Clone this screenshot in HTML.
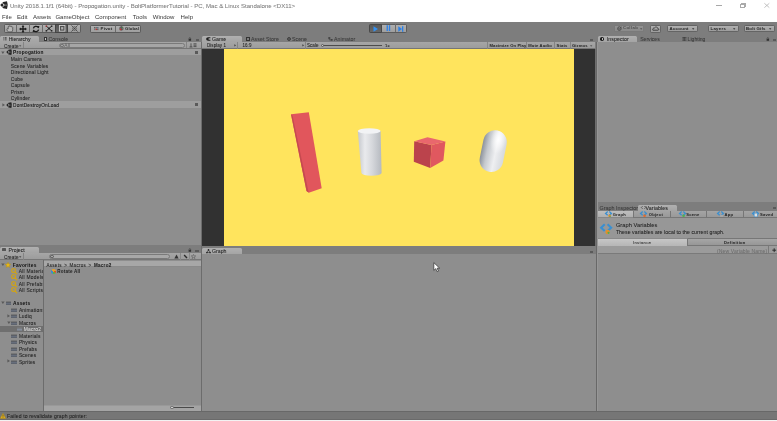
<!DOCTYPE html>
<html><head><meta charset="utf-8">
<style>
*{box-sizing:border-box;margin:0;padding:0}
html,body{width:777px;height:421px;overflow:hidden;background:#7d7d7d;font-family:"Liberation Sans",sans-serif;position:relative}
.a{position:absolute}
.t{position:absolute;white-space:nowrap;font-size:5.2px;line-height:6px;color:#222;-webkit-text-stroke:0.06px currentColor}
.m{position:absolute;white-space:nowrap;font-size:6.05px;line-height:7px;color:#383838;top:14px}
.s{position:absolute;white-space:nowrap;font-size:4.5px;line-height:6px;color:#1c1c1c;letter-spacing:0.12px}
.b{font-weight:bold;-webkit-text-stroke:0}
.tab{position:absolute;background:linear-gradient(#b0b0b0,#a4a4a4);border-radius:1.5px 1.5px 0 0}
.tbar{position:absolute;background:linear-gradient(#a6a6a6,#9c9c9c);border-bottom:0.8px solid #767676}
.panel{position:absolute;background:#8e8e8e}
.tb{position:absolute;background:linear-gradient(#b0b0b0,#9e9e9e);border:0.8px solid #5c5c5c}
.btn{position:absolute;background:linear-gradient(#b0b0b0,#9c9c9c);border:0.8px solid #646464;border-radius:1.5px}
.sep{position:absolute;width:0.8px;background:#7e7e7e}
.ham{position:absolute;width:3.4px;height:2px;border-top:0.45px solid #5a5a5a;border-bottom:0.45px solid #5a5a5a}
.ham:after{content:"";position:absolute;left:0;top:0.32px;width:3.4px;height:0.45px;background:#5a5a5a}
.dd{position:absolute;width:0;height:0;border-left:1.1px solid transparent;border-right:1.1px solid transparent;border-top:1.4px solid #333}
.fold{position:absolute;width:5.4px;height:4.1px;background:linear-gradient(#5c6066,#5a5e66 35%,#70798a 60%,#50545a);border-radius:0.3px;border-top:0.6px solid #777}
.mag{position:absolute;width:5.5px;height:5.5px}
.mag:before{content:"";position:absolute;left:0.3px;top:0.3px;width:3.4px;height:3.4px;border:0.9px solid #c9a01a;border-radius:50%}
.mag:after{content:"";position:absolute;left:3.1px;top:4px;width:2.8px;height:1.1px;background:#c9a01a;transform:rotate(45deg)}
svg{position:absolute;overflow:visible}
.clip{position:absolute;overflow:hidden}
</style></head><body><div id="root" style="position:absolute;left:0;top:0;width:777px;height:421px;will-change:transform">
<!-- title bar -->
<div class="a" style="left:0;top:0;width:777px;height:22px;background:#fff"></div>
<div class="t" style="left:10px;top:2.9px;font-size:6.05px;line-height:7px;color:#7c7c7c">Unity 2018.1.1f1 (64bit) - Propogation.unity - BoltPlatformerTutorial - PC, Mac &amp; Linux Standalone &lt;DX11&gt;</div>
<svg style="left:0px;top:1.2px" width="8" height="8.2" viewBox="0 0 8 8.2"><path d="M0.2 4.1 L3.2 0.9 L7 0.3 L7.8 4.1 L7 7.9 L3.2 7.3 Z" fill="#262626"/><path d="M4.4 4.1 L2.4 2.3 M4.4 4.1 L2.4 5.9" stroke="#f0f0f0" stroke-width="1"/><path d="M4.4 4.1 L7.8 4.1" stroke="#999" stroke-width="0.8"/></svg>
<div class="m" style="left:2px">File</div>
<div class="m" style="left:17px">Edit</div>
<div class="m" style="left:33px">Assets</div>
<div class="m" style="left:55.4px">GameObject</div>
<div class="m" style="left:95px">Component</div>
<div class="m" style="left:132.8px">Tools</div>
<div class="m" style="left:152.8px">Window</div>
<div class="m" style="left:180.6px">Help</div>
<!-- window controls -->
<div class="a" style="left:716.3px;top:5px;width:5.8px;height:0.7px;background:#a8a8a8"></div>
<div class="a" style="left:740.2px;top:3.8px;width:4.8px;height:4px;border:0.7px solid #aaa"></div>
<div class="a" style="left:741.2px;top:3px;width:4.8px;height:4px;border-top:0.7px solid #aaa;border-right:0.7px solid #aaa"></div>
<svg style="left:764.2px;top:3.2px" width="6" height="5"><path d="M0.4 0.3 L5.3 4.6 M5.3 0.3 L0.4 4.6" stroke="#aaa" stroke-width="0.7"/></svg>

<!-- toolbar tool buttons -->
<div class="tb" style="left:3.8px;top:23.9px;width:77px;height:9px;border-radius:1.5px"></div>
<div class="sep" style="left:16.4px;top:24.3px;height:8.2px;background:#6a6a6a"></div>
<div class="sep" style="left:29.4px;top:24.3px;height:8.2px;background:#6a6a6a"></div>
<div class="sep" style="left:42.4px;top:24.3px;height:8.2px;background:#6a6a6a"></div>
<div class="a" style="left:54.8px;top:23.9px;width:13.6px;height:9px;background:linear-gradient(#585858,#666);border:0.8px solid #454545"></div>
<!-- tool icons -->
<svg style="left:6.1px;top:24.9px" width="8" height="7.4" viewBox="0 0 8 7.4"><path d="M2.3 6.9 C1.1 5.6 0.6 4.4 1.1 3.8 C1.5 3.4 2 3.7 2.2 4 L2.2 1.8 C2.2 1.1 3.1 1.1 3.2 1.7 L3.3 1.2 C3.4 0.5 4.3 0.5 4.4 1.2 L4.5 1.5 C4.7 0.9 5.5 1 5.6 1.6 L5.6 2 C5.9 1.6 6.7 1.7 6.7 2.3 L6.7 4.8 C6.7 5.8 6.3 6.4 5.9 6.9 Z" fill="#b8b8b8" stroke="#4a4a4a" stroke-width="0.75"/></svg>
<svg style="left:19px;top:24.5px" width="8" height="8" viewBox="0 0 8 8"><path d="M4 1 V7 M1 4 H7" stroke="#1a1a1a" stroke-width="1.3"/><path d="M4 0.1 L2.6 1.8 H5.4 Z M4 7.9 L2.6 6.2 H5.4 Z M0.1 4 L1.8 2.6 V5.4 Z M7.9 4 L6.2 2.6 V5.4 Z" fill="#1a1a1a"/></svg>
<svg style="left:32px;top:24.6px" width="8" height="8" viewBox="0 0 8 8"><path d="M1.4 3.4 A2.8 2.6 0 0 1 6.2 2.2" fill="none" stroke="#1a1a1a" stroke-width="1.3"/><path d="M6.6 4.6 A2.8 2.6 0 0 1 1.8 5.8" fill="none" stroke="#1a1a1a" stroke-width="1.3"/><path d="M4.8 1.2 L7.4 1 L6.8 3.6Z M3.2 6.8 L0.6 7 L1.2 4.4Z" fill="#1a1a1a"/></svg>
<svg style="left:45.2px;top:25.2px" width="8" height="7" viewBox="0 0 8 7"><path d="M1.6 1.4 L6.4 5.6 M6.4 1.4 L1.6 5.6" stroke="#1e1e1e" stroke-width="0.9"/><rect x="0.6" y="0.5" width="1.5" height="1.4" fill="#8a2424"/><rect x="5.9" y="0.5" width="1.5" height="1.4" fill="#1e1e1e"/><rect x="0.6" y="5.1" width="1.5" height="1.4" fill="#1e1e1e"/><rect x="5.9" y="5.1" width="1.5" height="1.4" fill="#1e1e1e"/><rect x="3.1" y="2.6" width="1.8" height="1.8" fill="#2a2a2a"/></svg>
<svg style="left:58.6px;top:25.1px" width="6.4" height="6.6" viewBox="0 0 6.4 6.6"><rect x="0.45" y="0.45" width="5.5" height="5.7" fill="#505050" stroke="#cfcfcf" stroke-width="0.9"/><rect x="2.1" y="2.1" width="2.2" height="2.4" fill="#b0b0b0"/></svg>
<svg style="left:71.2px;top:25px" width="7" height="7" viewBox="0 0 7 7"><circle cx="3.5" cy="3.5" r="1.7" fill="none" stroke="#333" stroke-width="0.7"/><circle cx="3.5" cy="3.5" r="0.6" fill="#333"/><path d="M0.5 0.5 L1.9 1.9 M6.5 0.5 L5.1 1.9 M0.5 6.5 L1.9 5.1 M6.5 6.5 L5.1 5.1" stroke="#333" stroke-width="0.8"/></svg>

<!-- pivot / global -->
<div class="tb" style="left:89.8px;top:24.5px;width:51px;height:8px;border-radius:1.5px"></div>
<div class="sep" style="left:115px;top:25px;height:7px;background:#6a6a6a"></div>
<svg style="left:94.1px;top:27px" width="4.5" height="3.2"><rect x="0" y="0" width="1.4" height="1.4" fill="#606060"/><rect x="1.6" y="0" width="1.4" height="1.4" fill="#707070"/><rect x="3.1" y="0" width="1.4" height="1.4" fill="#5a6a80"/><rect x="0" y="1.7" width="1.4" height="1.4" fill="#777"/><rect x="1.6" y="1.7" width="1.4" height="1.4" fill="#c03030"/><rect x="3.1" y="1.7" width="1.4" height="1.4" fill="#606060"/></svg>
<div class="t b" style="left:100.5px;top:25.8px;font-size:4.4px;color:#262626;letter-spacing:0.25px">Pivot</div>
<svg style="left:118.9px;top:26.2px" width="4.8" height="4.8"><circle cx="2.4" cy="2.4" r="2.2" fill="#777"/><path d="M0.6 1.6 Q2.4 0.6 4.2 1.6 M0.4 3 Q2.4 4 4.4 3 M2.4 0.2 V4.6" stroke="#444" stroke-width="0.5" fill="none"/><circle cx="1.6" cy="3.4" r="0.9" fill="#c83030"/><circle cx="3.4" cy="1.4" r="0.6" fill="#4a8a4a"/></svg>
<div class="t b" style="left:125px;top:25.8px;font-size:4.2px;color:#262626;letter-spacing:0.2px">Global</div>

<!-- play buttons -->
<div class="tb" style="left:369px;top:23.9px;width:38.2px;height:9px;border-radius:1.5px"></div>
<div class="a" style="left:369px;top:23.9px;width:13.2px;height:9px;background:linear-gradient(#595959,#676767);border:0.8px solid #484848;border-radius:1.5px 0 0 1.5px"></div>
<div class="sep" style="left:394.7px;top:24.3px;height:8.2px;background:#6a6a6a"></div>
<svg style="left:373.2px;top:25.6px" width="6" height="6"><path d="M0.5 0.3 L5 3 L0.5 5.7 Z" fill="#3390f0"/></svg>
<svg style="left:386px;top:25.4px" width="5" height="6"><rect x="0.6" y="0.2" width="1.3" height="5.8" fill="#2a80e8"/><rect x="2.9" y="0.2" width="1.3" height="5.8" fill="#2a80e8"/></svg>
<svg style="left:398.4px;top:25.5px" width="6" height="6"><path d="M0.3 0.3 L4 3 L0.3 5.7 Z" fill="#2a80e8"/><rect x="4" y="0.2" width="1.3" height="5.6" fill="#2a80e8"/></svg>

<!-- right toolbar -->
<div class="btn" style="left:614px;top:24.9px;width:30px;height:6.9px;background:linear-gradient(#939393,#8a8a8a);border-color:#7a7a7a"></div>
<svg style="left:617.3px;top:25.9px" width="5" height="5"><circle cx="2.4" cy="2.6" r="1.8" fill="none" stroke="#4a4a4a" stroke-width="0.9"/><path d="M1.5 2.4 L2.4 3.3 L4.4 0.7" fill="none" stroke="#4a4a4a" stroke-width="0.9"/></svg>
<div class="t b" style="left:623px;top:25.4px;font-size:4.2px;color:#4e4e4e;letter-spacing:0.38px">Collab</div>
<svg style="left:639.6px;top:27.8px" width="2.6" height="2"><path d="M0 0.2 H2.4 L1.2 1.7 Z" fill="#555"/></svg>
<div class="btn" style="left:650px;top:24.6px;width:11.3px;height:8.4px"></div>
<svg style="left:652px;top:26.2px" width="7" height="5"><path d="M0.9 4.2 H6 C7 4.2 7 2.5 5.8 2.5 C5.6 0.9 3.4 0.4 2.6 1.9 C1.4 1.7 0.2 3 0.9 4.2 Z" fill="none" stroke="#222" stroke-width="0.75"/></svg>
<div class="btn" style="left:667px;top:25.2px;width:30.6px;height:7px"></div>
<div class="t b" style="left:669.5px;top:25.6px;font-size:4.3px;color:#222;letter-spacing:0.3px">Account</div>
<svg style="left:691.5px;top:28.1px" width="2.6" height="2"><path d="M0 0.2 H2.4 L1.2 1.7 Z" fill="#333"/></svg>
<div class="btn" style="left:708px;top:25.2px;width:30.6px;height:7px"></div>
<div class="t b" style="left:710.5px;top:25.6px;font-size:4.3px;color:#222;letter-spacing:0.3px">Layers</div>
<svg style="left:732.5px;top:28.1px" width="2.6" height="2"><path d="M0 0.2 H2.4 L1.2 1.7 Z" fill="#333"/></svg>
<div class="btn" style="left:743.6px;top:25.2px;width:31.2px;height:7px"></div>
<div class="t b" style="left:746px;top:25.6px;font-size:4.3px;color:#222;letter-spacing:0.2px">Bolt Gifs</div>
<svg style="left:768.5px;top:28.1px" width="2.6" height="2"><path d="M0 0.2 H2.4 L1.2 1.7 Z" fill="#333"/></svg>

<!-- ===== Left column ===== -->
<!-- hierarchy -->
<div class="tab" style="left:0;top:35.6px;width:39.3px;height:6.5px"></div>
<svg style="left:2.6px;top:37.2px" width="4" height="4"><path d="M0.4 0.5 H1.4 M0.4 1.7 H1.4 M0.4 2.9 H1.4 M2 0.5 H3.6 M2 1.7 H3.6 M2 2.9 H3.6" stroke="#333" stroke-width="0.7"/></svg>
<div class="t" style="left:8.7px;top:36.1px;color:#1e1e1e;font-size:5.1px">Hierarchy</div>
<div class="a" style="left:43.9px;top:37px;width:3.4px;height:4.2px;border:0.6px solid #333;background:#c8c8c8"></div>
<div class="t" style="left:48.5px;top:36.1px;color:#363636;letter-spacing:0.1px">Console</div>
<svg style="left:187.5px;top:36.6px" width="4" height="4"><rect x="0.6" y="1.9" width="2.5" height="1.9" fill="#333"/><path d="M1.1 2 V1.4 A0.75 0.75 0 0 1 2.6 1.4 V2" fill="none" stroke="#333" stroke-width="0.5"/></svg>
<div class="ham" style="left:195.5px;top:38.9px"></div>
<div class="tbar" style="left:0;top:42px;width:201.3px;height:6.5px"></div>
<div class="t" style="left:3.9px;top:43.5px;font-size:4.7px;color:#222;letter-spacing:0.12px">Create</div>
<svg style="left:18.9px;top:45.0px" width="2.6" height="2"><path d="M0 0.2 H2.4 L1.2 1.7 Z" fill="#555"/></svg>
<div class="sep" style="left:22.5px;top:42px;height:6px;background:#848484"></div>
<div class="a" style="left:59px;top:42.9px;width:126px;height:4.9px;border:0.7px solid #7a7a7a;border-radius:2.5px;background:#a6a6a6"></div>
<div class="a" style="left:60.4px;top:43.6px;width:3.2px;height:3.2px;border:0.6px solid #666;border-radius:50%"></div>
<div class="t" style="left:64.3px;top:42.5px;font-size:4.8px;color:#666;letter-spacing:0.2px">All</div>
<div class="sep" style="left:186px;top:42px;height:6px;background:#848484"></div>
<svg style="left:189px;top:43px" width="8" height="5"><path d="M2 0.3 V4 H0.5 M2 4 H3.5 M4.5 0.8 H7.5 M4.5 2.2 H7.5 M4.5 3.6 H7.5" fill="none" stroke="#333" stroke-width="0.7"/></svg>
<div class="panel" style="left:0;top:48.5px;width:201.3px;height:196.6px"></div>
<div class="a" style="left:0;top:49px;width:201.3px;height:6.4px;background:#9e9e9e"></div>
<svg style="left:1.4px;top:50.8px" width="4" height="4"><path d="M0.2 0.4 H3.6 L1.9 3 Z" fill="#5a5a5a"/></svg>
<svg style="left:6px;top:49.3px" width="6.2" height="6.2" viewBox="0 0 8 8.2"><path d="M0.2 4.1 L3.2 0.9 L7 0.3 L7.8 4.1 L7 7.9 L3.2 7.3 Z" fill="#262626"/><path d="M4.4 4.1 L2.4 2.3 M4.4 4.1 L2.4 5.9" stroke="#b8b8b8" stroke-width="1"/><path d="M4.4 4.1 L7.8 4.1" stroke="#777" stroke-width="0.8"/></svg>
<div class="t b" style="left:13.1px;top:50.3px;color:#111;font-size:4.8px;letter-spacing:0.2px">Propogation</div>
<div class="ham" style="left:195px;top:51.2px"></div>
<div class="t" style="left:10.8px;top:57.3px;font-size:4.9px;letter-spacing:0.16px">Main Camera</div>
<div class="t" style="left:10.8px;top:63.7px;font-size:4.9px;letter-spacing:0.16px">Scene Variables</div>
<div class="t" style="left:10.8px;top:70.3px;font-size:4.9px;letter-spacing:0.16px">Directional Light</div>
<div class="t" style="left:10.8px;top:76.8px;font-size:4.9px;letter-spacing:0.16px">Cube</div>
<div class="t" style="left:10.8px;top:83.3px;font-size:4.9px;letter-spacing:0.16px">Capsule</div>
<div class="t" style="left:10.8px;top:89.8px;font-size:4.9px;letter-spacing:0.16px">Prism</div>
<div class="t" style="left:10.8px;top:96.4px;font-size:4.9px;letter-spacing:0.16px">Cylinder</div>
<div class="a" style="left:0;top:101.3px;width:201.3px;height:6.3px;background:#9e9e9e"></div>
<svg style="left:1.8px;top:102.6px" width="4" height="4"><path d="M0.4 0.2 V3.6 L3 1.9 Z" fill="#5a5a5a"/></svg>
<svg style="left:6px;top:101.5px" width="6.2" height="6.2" viewBox="0 0 8 8.2"><path d="M0.2 4.1 L3.2 0.9 L7 0.3 L7.8 4.1 L7 7.9 L3.2 7.3 Z" fill="#262626"/><path d="M4.4 4.1 L2.4 2.3 M4.4 4.1 L2.4 5.9" stroke="#b8b8b8" stroke-width="1"/><path d="M4.4 4.1 L7.8 4.1" stroke="#777" stroke-width="0.8"/></svg>
<div class="t" style="left:13.1px;top:102.6px;color:#111;font-size:4.75px;letter-spacing:0.16px">DontDestroyOnLoad</div>
<div class="ham" style="left:195px;top:103.4px"></div>

<!-- project -->
<div class="a" style="left:0;top:245.1px;width:201.3px;height:1.9px;background:#7d7d7d"></div>
<div class="tab" style="left:0;top:247px;width:39px;height:5.8px"></div>
<div class="a" style="left:2.2px;top:248.4px;width:4.2px;height:3px;background:#555;border-radius:0.6px"></div>
<div class="t" style="left:8.6px;top:246.8px;color:#222">Project</div>
<svg style="left:187.8px;top:248.4px" width="4" height="4"><rect x="0.6" y="1.9" width="2.5" height="1.9" fill="#333"/><path d="M1.1 2 V1.4 A0.75 0.75 0 0 1 2.6 1.4 V2" fill="none" stroke="#333" stroke-width="0.5"/></svg>
<div class="ham" style="left:195.2px;top:249.6px"></div>
<div class="tbar" style="left:0;top:252.7px;width:201.3px;height:7.6px"></div>
<div class="t" style="left:3.9px;top:254.7px;font-size:4.7px;color:#222;letter-spacing:0.12px">Create</div>
<svg style="left:18.8px;top:256.40000000000003px" width="2.6" height="2"><path d="M0 0.2 H2.4 L1.2 1.7 Z" fill="#444"/></svg>
<div class="sep" style="left:23.3px;top:253px;height:7px;background:#848484"></div>
<div class="a" style="left:48.5px;top:253.6px;width:121px;height:5.9px;border:0.7px solid #7a7a7a;border-radius:3px;background:#a8a8a8"></div>
<div class="a" style="left:50.4px;top:254.6px;width:3.2px;height:3.2px;border:0.6px solid #555;border-radius:50%"></div>
<div class="sep" style="left:180px;top:253px;height:7px;background:#888"></div>
<div class="sep" style="left:189px;top:253px;height:7px;background:#888"></div>
<svg style="left:173.8px;top:254.2px" width="5" height="5"><path d="M2.5 0.4 L4.6 4.6 H0.4 Z" fill="#333"/></svg>
<svg style="left:182.5px;top:254.2px" width="5" height="5"><path d="M0.6 1.6 L1.6 0.6 L4.5 3.5 L3.5 4.5 Z" fill="#2a2a2a"/></svg>
<svg style="left:191px;top:254px" width="5" height="5"><path d="M2.5 0.3 L3.1 1.9 L4.8 1.9 L3.4 2.9 L4 4.6 L2.5 3.6 L1 4.6 L1.6 2.9 L0.2 1.9 L1.9 1.9 Z" fill="none" stroke="#555" stroke-width="0.5"/></svg>
<div class="panel" style="left:0;top:260.3px;width:201.3px;height:150.5px"></div>
<div class="a" style="left:43px;top:260.3px;width:1px;height:150.5px;background:#6c6c6c"></div>
<div class="a" style="left:44px;top:261.1px;width:157.3px;height:6.3px;background:#a7a7a7;border-bottom:0.6px solid #8a8a8a"></div>
<div class="t" style="left:46.4px;top:262.9px;color:#222;font-size:4.5px;letter-spacing:0.32px;word-spacing:0.8px">Assets &gt; Macros &gt; <b>Macro2</b></div>
<div class="a" style="left:50.6px;top:268.8px;width:5.6px;height:5.6px;border-radius:50%;background:conic-gradient(from -30deg,#e8a028 0 30%,#e05028 30% 45%,#60b040 45% 60%,#3a8ad0 60% 95%,#e8a028 95%)"></div>
<div class="t b" style="left:57.3px;top:269.1px;color:#222;font-size:4.55px;letter-spacing:0.2px">Rotate All</div>

<div class="clip" style="left:0;top:260.3px;width:43px;height:110px">
<svg style="left:1.2px;top:2.6px" width="4" height="4"><path d="M0.2 0.4 H3.6 L1.9 3 Z" fill="#5a5a5a"/></svg>
<svg style="left:5.3px;top:1.4px" width="6" height="6"><path d="M3 0.2 L3.8 2.1 L5.8 2.2 L4.3 3.5 L4.8 5.5 L3 4.4 L1.2 5.5 L1.7 3.5 L0.2 2.2 L2.2 2.1 Z" fill="#e8b818" stroke="#b08a10" stroke-width="0.4"/></svg>
<div class="t b" style="left:12.8px;top:2.3px;color:#111;font-size:4.85px;letter-spacing:0.25px">Favorites</div>
<svg style="left:11.2px;top:7.6px" width="6.5" height="6.5"><circle cx="2.6" cy="2.5" r="2" fill="#a89a6a" fill-opacity="0.35" stroke="#cda21c" stroke-width="1.1"/><path d="M4.1 4.1 L5.7 5.8" stroke="#cda21c" stroke-width="1.3" stroke-linecap="round"/></svg>
<div class="t" style="left:18.7px;top:8.7px;font-size:4.9px;letter-spacing:0.25px">All Materials</div>
<svg style="left:11.2px;top:14.0px" width="6.5" height="6.5"><circle cx="2.6" cy="2.5" r="2" fill="#a89a6a" fill-opacity="0.35" stroke="#cda21c" stroke-width="1.1"/><path d="M4.1 4.1 L5.7 5.8" stroke="#cda21c" stroke-width="1.3" stroke-linecap="round"/></svg>
<div class="t" style="left:18.7px;top:15.1px;font-size:4.9px;letter-spacing:0.25px">All Models</div>
<svg style="left:11.2px;top:20.400000000000002px" width="6.5" height="6.5"><circle cx="2.6" cy="2.5" r="2" fill="#a89a6a" fill-opacity="0.35" stroke="#cda21c" stroke-width="1.1"/><path d="M4.1 4.1 L5.7 5.8" stroke="#cda21c" stroke-width="1.3" stroke-linecap="round"/></svg>
<div class="t" style="left:18.7px;top:21.5px;font-size:4.9px;letter-spacing:0.25px">All Prefabs</div>
<svg style="left:11.2px;top:26.8px" width="6.5" height="6.5"><circle cx="2.6" cy="2.5" r="2" fill="#a89a6a" fill-opacity="0.35" stroke="#cda21c" stroke-width="1.1"/><path d="M4.1 4.1 L5.7 5.8" stroke="#cda21c" stroke-width="1.3" stroke-linecap="round"/></svg>
<div class="t" style="left:18.7px;top:27.9px;font-size:4.9px;letter-spacing:0.25px">All Scripts</div>

<svg style="left:1.2px;top:41px" width="4" height="4"><path d="M0.2 0.4 H3.6 L1.9 3 Z" fill="#5a5a5a"/></svg>
<div class="fold" style="left:5.7px;top:40.8px"></div>
<div class="t b" style="left:12.9px;top:40.9px;color:#111;font-size:4.9px;letter-spacing:0.25px">Assets</div>
<div class="fold" style="left:11.4px;top:47.4px"></div>
<div class="t" style="left:18.9px;top:47.3px;font-size:4.9px;letter-spacing:0.2px">Animations</div>
<svg style="left:7px;top:53.5px" width="4" height="4"><path d="M0.4 0.2 V3.6 L3 1.9 Z" fill="#5a5a5a"/></svg>
<div class="fold" style="left:11.4px;top:53.9px"></div>
<div class="t" style="left:18.9px;top:53.8px;font-size:4.9px;letter-spacing:0.2px">Ludiq</div>
<svg style="left:6.6px;top:60.4px" width="4" height="4"><path d="M0.2 0.4 H3.6 L1.9 3 Z" fill="#5a5a5a"/></svg>
<div class="fold" style="left:11.4px;top:60.4px"></div>
<div class="t" style="left:18.9px;top:60.3px;font-size:4.9px;letter-spacing:0.2px">Macros</div>
<div class="a" style="left:0;top:65.8px;width:43px;height:5.8px;background:#6f6f6f"></div>
<div class="fold" style="left:17.1px;top:66.8px;background:linear-gradient(#7a7e84,#787c84 35%,#8e98a8 60%,#6e7278)"></div>
<div class="t" style="left:23.7px;top:66.8px;color:#dedede;font-size:4.9px;letter-spacing:0.2px">Macro2</div>
<div class="fold" style="left:11.4px;top:73.5px"></div>
<div class="t" style="left:18.9px;top:73.4px;font-size:4.9px;letter-spacing:0.2px">Materials</div>
<div class="fold" style="left:11.4px;top:80px"></div>
<div class="t" style="left:18.9px;top:79.9px;font-size:4.9px;letter-spacing:0.2px">Physics</div>
<div class="fold" style="left:11.4px;top:86.5px"></div>
<div class="t" style="left:18.9px;top:86.4px;font-size:4.9px;letter-spacing:0.2px">Prefabs</div>
<div class="fold" style="left:11.4px;top:93px"></div>
<div class="t" style="left:18.9px;top:92.9px;font-size:4.9px;letter-spacing:0.2px">Scenes</div>
<svg style="left:7px;top:99.2px" width="4" height="4"><path d="M0.4 0.2 V3.6 L3 1.9 Z" fill="#5a5a5a"/></svg>
<div class="fold" style="left:11.4px;top:99.5px"></div>
<div class="t" style="left:18.9px;top:99.4px;font-size:4.9px;letter-spacing:0.2px">Sprites</div>
</div>

<div class="a" style="left:44px;top:404.8px;width:157.3px;height:6.3px;background:#a4a4a4;border-top:0.6px solid #999"></div>
<div class="a" style="left:172px;top:407.4px;width:22px;height:0.8px;background:#4a4a4a"></div>
<div class="a" style="left:170.2px;top:405.9px;width:3.6px;height:3.6px;border-radius:50%;background:#d0d0d0;border:0.6px solid #666"></div>

<!-- ===== Center column ===== -->
<div class="tab" style="left:202.4px;top:35.5px;width:39.4px;height:6.6px"></div>
<svg style="left:205.8px;top:37.1px" width="5" height="4"><path d="M2.2 0.3 C0.8 0.3 0.2 1.2 0.2 2 C0.2 2.9 0.9 3.7 2.2 3.7 L4.4 3.7 L4.4 2.8 L2.6 2.8 L2.6 1.2 L4.4 1.2 L4.4 0.3 Z" fill="#1e1e1e"/></svg>
<div class="t" style="left:212px;top:36.1px;color:#222">Game</div>
<div class="a" style="left:246.2px;top:37.1px;width:3.4px;height:3.8px;border:0.7px solid #333"></div>
<div class="t" style="left:251px;top:36.1px;color:#383838;letter-spacing:0.1px">Asset Store</div>
<svg style="left:287.4px;top:37px" width="4" height="4"><circle cx="2" cy="2" r="1.5" fill="none" stroke="#333" stroke-width="0.7"/><path d="M2 0 V4 M0 2 H4" stroke="#333" stroke-width="0.5"/></svg>
<div class="t" style="left:292px;top:36.1px;color:#383838;letter-spacing:0.05px">Scene</div>
<svg style="left:327.6px;top:37px" width="5" height="4"><rect x="0.3" y="0.3" width="2" height="1.4" fill="#333"/><rect x="2.6" y="2.2" width="2" height="1.4" fill="#333"/><path d="M1.3 1.7 V2.9 H2.6" fill="none" stroke="#333" stroke-width="0.5"/></svg>
<div class="t" style="left:334px;top:36.1px;color:#383838;letter-spacing:0.05px">Animator</div>
<div class="ham" style="left:589.5px;top:38.6px"></div>
<div class="tbar" style="left:202.4px;top:42px;width:393px;height:7px"></div>
<div class="t" style="left:207px;top:42.7px;font-size:4.5px;color:#1e1e1e;letter-spacing:0.05px">Display 1</div>
<svg style="left:233.6px;top:44.4px" width="3" height="3"><path d="M0.3 0.2 L2.2 1.3 L0.3 2.4 Z" fill="#444"/></svg>
<div class="sep" style="left:237px;top:42px;height:7px;background:#848484"></div>
<div class="t" style="left:242.5px;top:42.7px;font-size:4.5px;color:#1e1e1e;letter-spacing:0.05px">16:9</div>
<svg style="left:301.6px;top:44.4px" width="3" height="3"><path d="M0.3 0.2 L2.2 1.3 L0.3 2.4 Z" fill="#444"/></svg>
<div class="sep" style="left:304.8px;top:42px;height:7px;background:#848484"></div>
<div class="t" style="left:307px;top:42.7px;font-size:4.5px;color:#1e1e1e;letter-spacing:0.05px">Scale</div>
<div class="a" style="left:322px;top:45.2px;width:60px;height:0.9px;background:#4c4c4c"></div>
<div class="a" style="left:320.6px;top:43.6px;width:3.6px;height:3.6px;border-radius:50%;background:#d0d0d0;border:0.6px solid #555"></div>
<div class="t" style="left:385px;top:42.7px;font-size:4.3px;color:#1e1e1e;letter-spacing:0.2px">1x</div>
<div class="sep" style="left:487px;top:42px;height:7px;background:#848484"></div>
<div class="t b" style="left:489.5px;top:42.7px;font-size:4.15px;color:#1e1e1e;letter-spacing:0.12px">Maximize On Play</div>
<div class="sep" style="left:526.3px;top:42px;height:7px;background:#848484"></div>
<div class="t b" style="left:528.3px;top:42.7px;font-size:4.15px;color:#1e1e1e;letter-spacing:0.12px">Mute Audio</div>
<div class="sep" style="left:554px;top:42px;height:7px;background:#848484"></div>
<div class="t b" style="left:556.6px;top:42.7px;font-size:4.15px;color:#1e1e1e;letter-spacing:0.12px">Stats</div>
<div class="sep" style="left:569.6px;top:42px;height:7px;background:#848484"></div>
<div class="t b" style="left:572px;top:42.7px;font-size:4.15px;color:#1e1e1e;letter-spacing:0.12px">Gizmos</div>
<svg style="left:589.6px;top:44.8px" width="2.6" height="2"><path d="M0 0.2 H2.4 L1.2 1.7 Z" fill="#555"/></svg>
<div class="a" style="left:202.4px;top:49px;width:393px;height:196.6px;background:#313131"></div>
<div class="a" style="left:223.9px;top:49px;width:349.8px;height:196.6px;background:#ffe45d"></div>

<!-- 3D objects -->
<svg style="left:0;top:0" width="777" height="421">
  <defs>
    <linearGradient id="cyl" x1="0" x2="1" y1="0" y2="0">
      <stop offset="0" stop-color="#c4c7cc"/><stop offset="0.3" stop-color="#e9eaed"/><stop offset="0.6" stop-color="#d6d8dc"/><stop offset="1" stop-color="#b5b9bf"/>
    </linearGradient>
    <linearGradient id="capl" x1="0" x2="1" y1="0" y2="0">
      <stop offset="0" stop-color="#8c929b"/><stop offset="0.25" stop-color="#c5c9ce"/><stop offset="0.6" stop-color="#eeeff1"/><stop offset="1" stop-color="#d5d8dc"/>
    </linearGradient>
    <radialGradient id="cap" cx="0.62" cy="0.2" r="0.35">
      <stop offset="0" stop-color="#ffffff" stop-opacity="1"/><stop offset="1" stop-color="#ffffff" stop-opacity="0"/>
    </radialGradient>
  </defs>
  <!-- red prism -->
  <polygon points="291,114.3 308.8,112.2 321.7,188.3 308.8,192.8 306.5,191" fill="#e1565c"/>
  <polygon points="291,114.3 292.6,115.8 308.6,192.6 306.5,191" fill="#c54a50"/>
  <!-- cylinder -->
  <path d="M357.8,131 L361.4,173 A10.1,2.8 0 0 0 381.6,173 L380.6,131 Z" fill="url(#cyl)"/>
  <ellipse cx="369.2" cy="131" rx="11.4" ry="2.8" fill="#f2f3f5"/>
  <!-- cube -->
  <polygon points="414.2,141.2 431.5,145 430.2,167.9 413.8,161.7" fill="#bb434c"/>
  <polygon points="431.5,145 445.4,141.5 443.4,160.4 430.2,167.9" fill="#e0585f"/>
  <polygon points="427.5,137.2 445.4,141.5 431.5,145 414.2,141.2" fill="#e9676d"/>
  <!-- capsule -->
  <g transform="translate(493.2,151.2) rotate(11.5)">
    <rect x="-11.8" y="-21" width="23.6" height="42" rx="11.8" ry="11.8" fill="url(#capl)"/><rect x="-11.8" y="-21" width="23.6" height="42" rx="11.8" ry="11.8" fill="url(#cap)"/>
  </g>
</svg>

<div class="a" style="left:202.4px;top:245.6px;width:393px;height:8.8px;background:#7d7d7d"></div>
<div class="tab" style="left:202.4px;top:248px;width:39.5px;height:6.4px"></div>
<svg style="left:205.6px;top:249.3px" width="5" height="4.5"><circle cx="2.5" cy="0.9" r="0.8" fill="#222"/><circle cx="0.9" cy="3.6" r="0.8" fill="#222"/><circle cx="4.1" cy="3.6" r="0.8" fill="#222"/><path d="M2.5 0.9 L0.9 3.6 H4.1 Z" fill="none" stroke="#222" stroke-width="0.5"/></svg>
<div class="t" style="left:212px;top:248.3px;color:#222">Graph</div>
<div class="ham" style="left:589.5px;top:251px"></div>
<div class="panel" style="left:202.4px;top:254.4px;width:393.4px;height:156.3px"></div>
<!-- cursor -->
<svg style="left:433px;top:261.6px" width="8" height="11"><path d="M0.8 0.6 L0.8 8.4 L2.7 6.7 L4.2 9.7 L5.5 9.1 L4.1 6.2 L6.7 6.2 Z" fill="#fff" stroke="#3a3a3a" stroke-width="0.8"/></svg>

<!-- column separators -->
<div class="a" style="left:201.3px;top:42px;width:1.1px;height:369px;background:#6c6c6c"></div>
<div class="a" style="left:594.8px;top:49px;width:1px;height:196.6px;background:#6e6e6e"></div>
<div class="a" style="left:595.8px;top:42px;width:1.3px;height:368.7px;background:#686868"></div>
<div class="a" style="left:597.1px;top:42.2px;width:0.8px;height:368.5px;background:#979797"></div>

<!-- ===== Right column ===== -->
<div class="tab" style="left:597.5px;top:35.8px;width:39.5px;height:6.4px"></div>
<div class="a" style="left:600.2px;top:37.1px;width:3.6px;height:3.6px;border-radius:50%;background:#1e1e1e"></div>
<div class="a" style="left:601.7px;top:37.8px;width:0.6px;height:1.8px;background:#bbb"></div>
<div class="t" style="left:606.7px;top:36.1px;color:#222;letter-spacing:0.1px">Inspector</div>
<div class="t" style="left:640.2px;top:36.1px;color:#383838;font-size:5.1px">Services</div>
<svg style="left:681.5px;top:37.2px" width="5" height="4"><path d="M0.3 0.5 H4.5 M0.3 1.9 H4.5 M0.3 3.3 H4.5 M2.2 0 V4" stroke="#333" stroke-width="0.6"/></svg>
<div class="t" style="left:687.6px;top:36.1px;color:#383838;font-size:5.1px">Lighting</div>
<svg style="left:766.2px;top:37px" width="4" height="4"><rect x="0.6" y="1.9" width="2.5" height="1.9" fill="#333"/><path d="M1.1 2 V1.4 A0.75 0.75 0 0 1 2.6 1.4 V2" fill="none" stroke="#333" stroke-width="0.5"/></svg>
<div class="ham" style="left:773px;top:38.6px"></div>
<div class="panel" style="left:597.5px;top:42.2px;width:180px;height:159.8px"></div>

<div class="a" style="left:597.5px;top:202px;width:180px;height:8.6px;background:#7d7d7d"></div>
<div class="clip" style="left:597.5px;top:204.5px;width:40px;height:6px"><div class="t" style="left:2px;top:0.1px;color:#3a3a3a;font-size:5.4px">Graph Inspector</div></div>
<div class="tab" style="left:637.5px;top:204.7px;width:39.6px;height:5.9px"></div>
<svg style="left:640.5px;top:206.4px" width="5" height="3"><path d="M1.6 0.2 L0.3 1.5 L1.6 2.8 M3.4 0.2 L4.7 1.5 L3.4 2.8" fill="none" stroke="#222" stroke-width="0.6"/></svg>
<div class="t" style="left:645.5px;top:204.7px;color:#222;font-size:5.3px;letter-spacing:0.1px">Variables</div>
<div class="ham" style="left:773px;top:207px"></div>
<div class="a" style="left:597.5px;top:210.6px;width:180px;height:7.8px;background:linear-gradient(#a4a4a4,#999);border-bottom:0.8px solid #777"></div>
<div class="a" style="left:597.5px;top:210.6px;width:35.7px;height:7.8px;background:linear-gradient(#bebebe,#b0b0b0);border-bottom:0.8px solid #888"></div>
<div class="sep" style="left:633.2px;top:210.6px;height:7.8px;background:#767676"></div>
<div class="sep" style="left:669.6px;top:210.6px;height:7.8px;background:#767676"></div>
<div class="sep" style="left:706.3px;top:210.6px;height:7.8px;background:#767676"></div>
<div class="sep" style="left:743.4px;top:210.6px;height:7.8px;background:#767676"></div>
<svg style="left:604.9px;top:211.3px" width="7" height="6.4" viewBox="0 0 13 12"><path d="M5 1 L1 4.5 L5 8 M8 1 L12 4.5 L8 8" fill="none" stroke="#3a8fd0" stroke-width="2.4"/><circle cx="8.5" cy="9" r="2.5" fill="#e0902a"/><circle cx="9.5" cy="10" r="1.3" fill="#4caf50"/></svg>
<div class="t b" style="left:612.7px;top:211.7px;font-size:4.1px;color:#1e1e1e;letter-spacing:0.25px">Graph</div>
<svg style="left:640.3px;top:211.3px" width="7" height="6.4" viewBox="0 0 13 12"><path d="M5 1 L1 4.5 L5 8 M8 1 L12 4.5 L8 8" fill="none" stroke="#3a8fd0" stroke-width="2.4"/><circle cx="8.5" cy="9" r="2.5" fill="#e06a2a"/></svg>
<div class="t b" style="left:648.8px;top:211.7px;font-size:4.1px;color:#1e1e1e;letter-spacing:0.25px">Object</div>
<svg style="left:678.5px;top:211.3px" width="7" height="6.4" viewBox="0 0 13 12"><path d="M5 1 L1 4.5 L5 8 M8 1 L12 4.5 L8 8" fill="none" stroke="#3a8fd0" stroke-width="2.4"/><circle cx="8.5" cy="9" r="2.5" fill="#4caf50"/></svg>
<div class="t b" style="left:686.3px;top:211.7px;font-size:4.1px;color:#1e1e1e;letter-spacing:0.25px">Scene</div>
<svg style="left:716.5px;top:211.3px" width="7" height="6.4" viewBox="0 0 13 12"><path d="M5 1 L1 4.5 L5 8 M8 1 L12 4.5 L8 8" fill="none" stroke="#3a8fd0" stroke-width="2.4"/><rect x="6" y="7" width="5" height="4" fill="#aaa"/></svg>
<div class="t b" style="left:724.5px;top:211.7px;font-size:4.1px;color:#1e1e1e;letter-spacing:0.25px">App</div>
<svg style="left:751.5px;top:211.3px" width="7" height="6.4" viewBox="0 0 13 12"><path d="M5 1 L1 4.5 L5 8 M8 1 L12 4.5 L8 8" fill="none" stroke="#3a8fd0" stroke-width="2.4"/><rect x="4" y="4" width="6" height="7" fill="#ddd" stroke="#3a8fd0" stroke-width="1"/></svg>
<div class="t b" style="left:760px;top:211.7px;font-size:4.1px;color:#1e1e1e;letter-spacing:0.25px">Saved</div>

<div class="panel" style="left:597.5px;top:218.4px;width:180px;height:192.3px"></div>
<div class="a" style="left:597.5px;top:218.4px;width:180px;height:19.3px;background:#979797"></div>
<svg style="left:599.6px;top:222.7px" width="12.3" height="11.6" viewBox="0 0 13 12"><path d="M5 1.2 L1.2 4.8 L5 8.4 M8 1.2 L11.8 4.8 L8 8.4" fill="none" stroke="#3a8fd0" stroke-width="2.2"/><circle cx="8" cy="9.4" r="2.3" fill="#e0902a"/><circle cx="9" cy="10.3" r="1.1" fill="#4caf50"/></svg>
<div class="t" style="left:615.9px;top:221.7px;font-size:5.7px;color:#222;letter-spacing:0.05px">Graph Variables</div>
<div class="t" style="left:615.9px;top:229.1px;color:#222;font-size:5.15px;letter-spacing:0.08px">These variables are local to the current graph.</div>
<div class="a" style="left:597.5px;top:237.7px;width:180px;height:8.6px;background:linear-gradient(#a6a6a6,#979797);border-top:0.8px solid #777;border-bottom:0.8px solid #777"></div>
<div class="a" style="left:597.5px;top:237.7px;width:90.7px;height:8.6px;background:linear-gradient(#c6c6c6,#b6b6b6);border-top:0.8px solid #8a8a8a;border-right:0.8px solid #777"></div>
<div class="t" style="left:633px;top:240.1px;font-size:4.3px;color:#333;letter-spacing:0.25px">Instance</div>
<div class="t b" style="left:724px;top:240.1px;font-size:4.15px;color:#222;letter-spacing:0.25px">Definition</div>
<div class="a" style="left:597.5px;top:246.3px;width:180px;height:7.7px;background:#9b9b9b;border-bottom:0.8px solid #7a7a7a"></div>
<div class="t" style="left:717px;top:248.1px;color:#6e6e6e;font-size:5.1px;letter-spacing:0.1px">(New Variable Name)</div>
<div class="sep" style="left:768.2px;top:246.3px;height:7.7px;background:#7a7a7a"></div>
<svg style="left:771.8px;top:248.3px" width="5" height="5"><path d="M2.2 0.3 V4.1 M0.3 2.2 H4.1" stroke="#222" stroke-width="0.9"/></svg>

<!-- status bar -->
<div class="a" style="left:0;top:410.7px;width:777px;height:9px;background:#767676;border-top:0.8px solid #686868"></div>
<div class="a" style="left:0;top:419.3px;width:777px;height:0.6px;background:#6a6a6a"></div>
<div class="a" style="left:0;top:419.8px;width:777px;height:1.2px;background:#f2f2f2"></div>
<svg style="left:0.4px;top:412.8px" width="6" height="5.8"><path d="M3 0.3 L5.8 5.4 L0.2 5.4 Z" fill="#e2b21e" stroke="#a88410" stroke-width="0.4"/><rect x="2.7" y="1.8" width="0.6" height="2" fill="#333"/><rect x="2.7" y="4.2" width="0.6" height="0.6" fill="#333"/></svg>
<div class="t" style="left:7px;top:412.7px;color:#1e1e1e;font-size:5.1px;letter-spacing:0.12px">Failed to revalidate graph pointer:</div>
</div></body></html>
